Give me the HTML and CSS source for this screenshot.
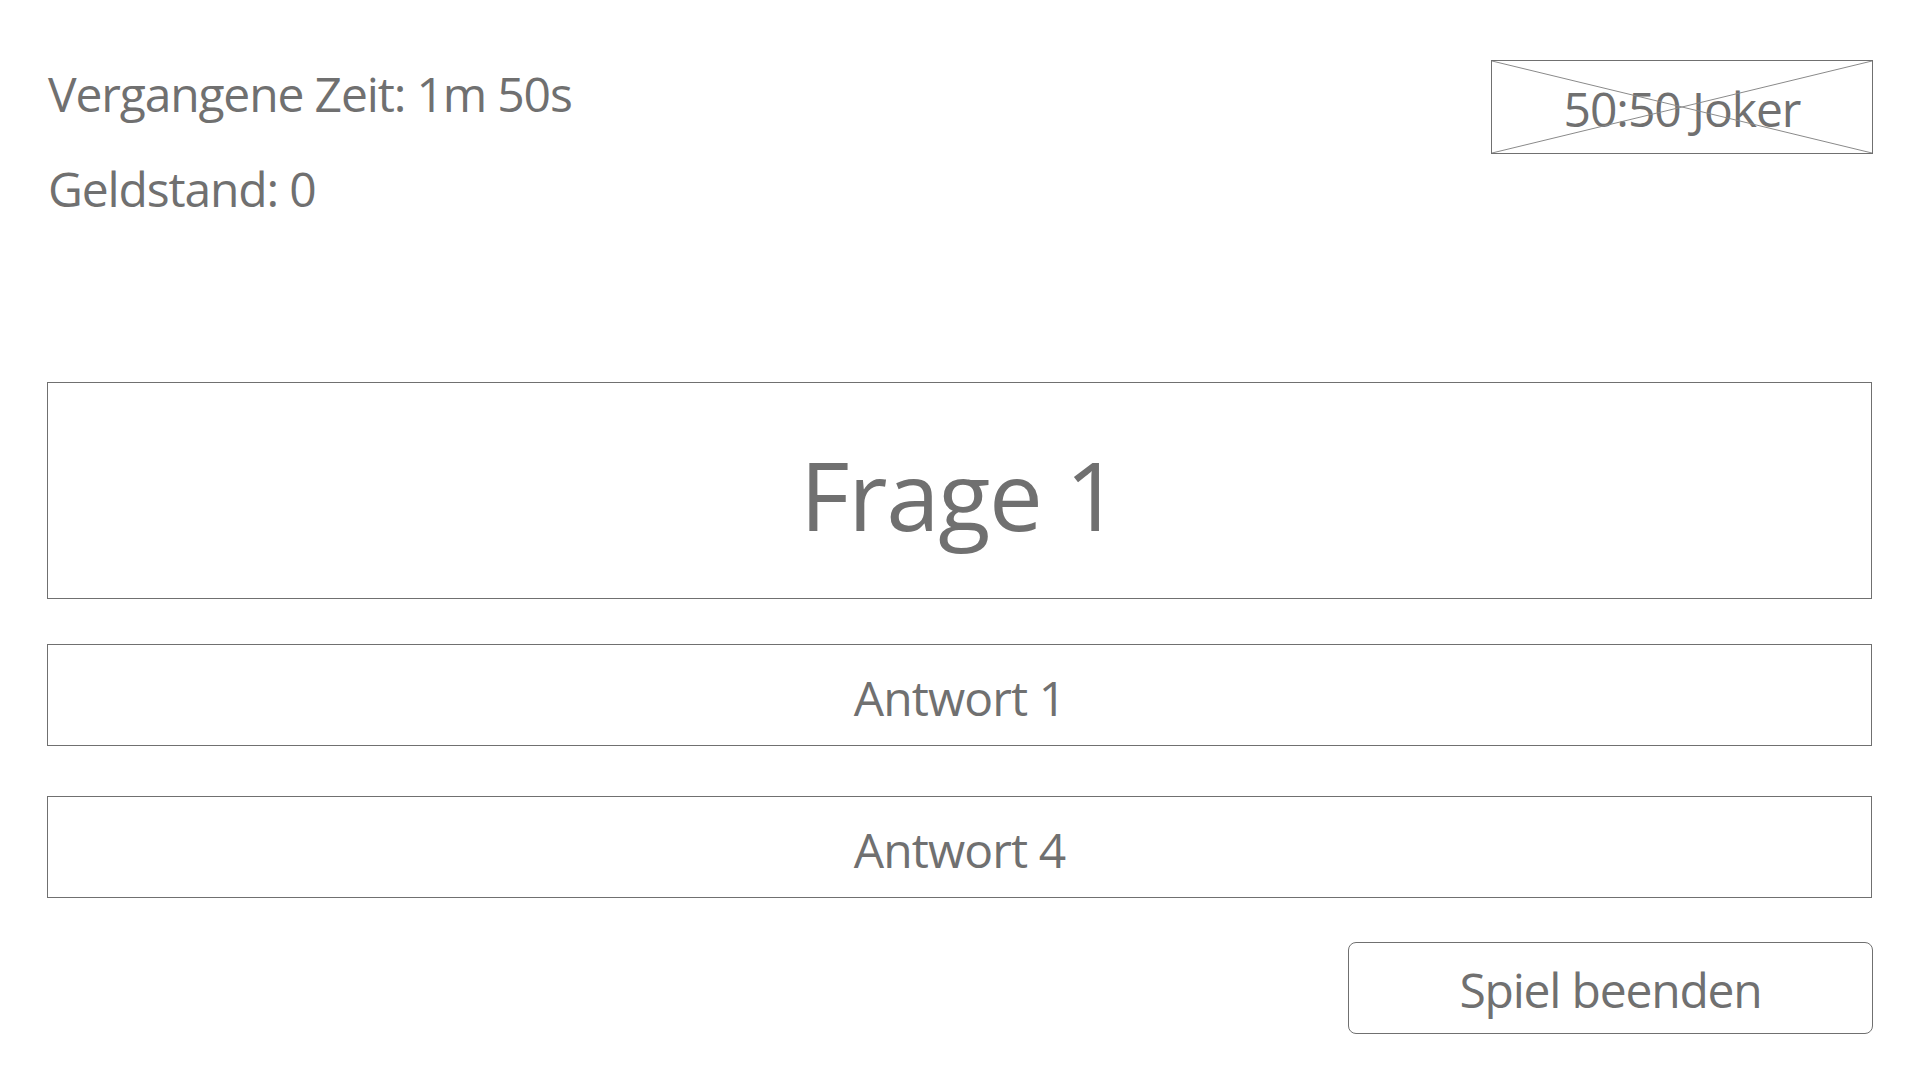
FILE: index.html
```html
<!DOCTYPE html>
<html lang="de">
<head>
<meta charset="utf-8">
<title>Quiz</title>
<link rel="stylesheet" href="styles.css">
</head>
<body>
<main class="screen">
  <header class="top">
    <div class="stats">
      <p class="stat">Vergangene Zeit: 1m 50s</p>
      <p class="stat stat-money">Geldstand: 0</p>
    </div>
    <button class="joker" type="button" disabled>
      <span class="joker-label">50:50 Joker</span>
      <svg class="joker-cross" viewBox="0 0 100 100" preserveAspectRatio="none" aria-hidden="true">
        <line x1="0" y1="0" x2="100" y2="100" vector-effect="non-scaling-stroke"/>
        <line x1="100" y1="0" x2="0" y2="100" vector-effect="non-scaling-stroke"/>
      </svg>
    </button>
  </header>
  <section class="question">Frage 1</section>
  <div class="answers">
    <button class="answer" type="button">Antwort 1</button>
    <button class="answer answer-second" type="button">Antwort 4</button>
  </div>
  <div class="actions">
    <button class="end" type="button">Spiel beenden</button>
  </div>
</main>
</body>
</html>
```
FILE: styles.css
```css
* { box-sizing: border-box; }
html, body { margin: 0; padding: 0; background: #ffffff; }
body {
  font-family: "Open Sans", "Noto Sans", "Liberation Sans", sans-serif;
  color: #707070;
  width: 1920px;
  height: 1080px;
  overflow: hidden;
}
.screen {
  padding: 60px 48px 0 47px;
}
.top {
  display: flex;
  justify-content: space-between;
  align-items: flex-start;
}
.stats {
  margin-top: 5px;
  padding-left: 1px;
}
.stat {
  margin: 0;
  font-size: 48px;
  line-height: 58px;
  letter-spacing: -1.15px;
}
.stat-money { margin-top: 37px; }
.joker {
  position: relative;
  width: 382px;
  height: 94px;
  border: 1px solid #707070;
  background: #fff;
  color: #707070;
  font-family: inherit;
  font-size: 48px;
  letter-spacing: -1.05px;
  padding: 4px 0 0;
  margin-right: -1px;
  display: flex;
  align-items: center;
  justify-content: center;
}
.joker-label { line-height: 58px; }
.joker-cross {
  position: absolute;
  inset: 0;
  width: 100%;
  height: 100%;
}
.joker-cross line { stroke: #8a8a8a; stroke-width: 1; }
.question {
  margin-top: 164px;
  height: 217px;
  border: 1px solid #707070;
  display: flex;
  align-items: center;
  justify-content: center;
  font-size: 96px;
  line-height: 115px;
  letter-spacing: -1.3px;
  padding-top: 6px;
}
.answers {
  display: flex;
  flex-direction: column;
  gap: 50px;
  margin-top: 45px;
}
.answer, .end {
  font-family: inherit;
  color: #707070;
  background: #fff;
  border: 1px solid #707070;
  font-size: 48px;
  line-height: 58px;
  letter-spacing: -0.9px;
  display: flex;
  align-items: center;
  justify-content: center;
  padding: 6px 0 0;
}
.answer {
  width: 100%;
  height: 102px;
}
.actions {
  display: flex;
  justify-content: flex-end;
  margin-top: 44px;
}
.end {
  width: 525px;
  height: 92px;
  border-radius: 8px;
  padding-top: 4px;
  letter-spacing: -1.2px;
  margin-right: -1px;
}
```
